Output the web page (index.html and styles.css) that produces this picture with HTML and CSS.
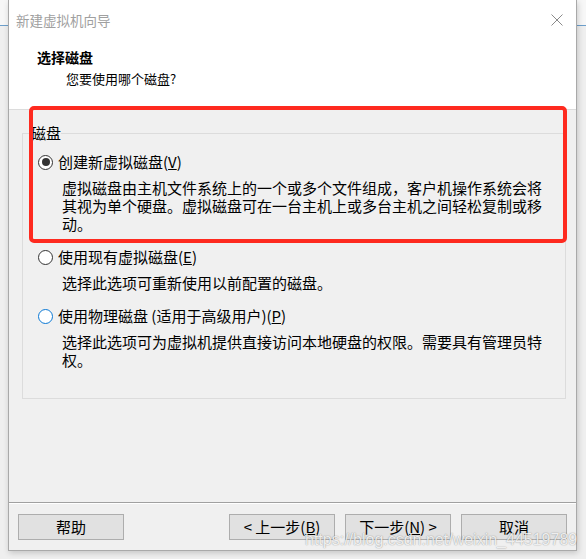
FILE: index.html
```html
<!DOCTYPE html>
<html lang="zh-CN">
<head>
<meta charset="utf-8">
<link rel="stylesheet" href="styles.css">
</head>
<body>
<div class="desk">
  <div class="window">
    <div class="header">
      <div class="titlebar">
        <span class="title">新建虚拟机向导</span>
        <svg class="close" width="12" height="12" viewBox="0 0 12 12"><path d="M0.5 0.5 L11.5 11.5 M11.5 0.5 L0.5 11.5" stroke="#8a8a8a" stroke-width="1" fill="none"/></svg>
      </div>
      <div class="heading">选择磁盘</div>
      <div class="subheading">您要使用哪个磁盘?</div>
    </div>
    <div class="content">
      <fieldset class="group">
        <legend class="group-label">磁盘</legend>
        <div class="options">
          <div class="option">
            <div class="opt-row"><span class="radio checked"></span><span class="opt-label">创建新虚拟磁盘(<u>V</u>)</span></div>
            <div class="desc">虚拟磁盘由主机文件系统上的一个或多个文件组成，客户机操作系统会将<br>其视为单个硬盘。虚拟磁盘可在一台主机上或多台主机之间轻松复制或移<br>动。</div>
          </div>
          <div class="option">
            <div class="opt-row"><span class="radio"></span><span class="opt-label">使用现有虚拟磁盘(<u>E</u>)</span></div>
            <div class="desc">选择此选项可重新使用以前配置的磁盘。</div>
          </div>
          <div class="option">
            <div class="opt-row"><span class="radio focus"></span><span class="opt-label">使用物理磁盘 (适用于高级用户)(<u>P</u>)</span></div>
            <div class="desc">选择此选项可为虚拟机提供直接访问本地硬盘的权限。需要具有管理员特<br>权。</div>
          </div>
        </div>
      </fieldset>
    </div>
    <div class="footer">
      <button class="btn">帮助</button>
      <div class="spacer"></div>
      <div class="btn-group">
        <button class="btn">&lt; 上一步(<u>B</u>)</button>
        <button class="btn">下一步(<u>N</u>) &gt;</button>
        <button class="btn">取消</button>
      </div>
    </div>
    <div class="annotation"></div>
    <div class="watermark">https://blog.csdn.net/weixin_44519789</div>
  </div>
</div>
</body>
</html>
```

FILE: styles.css
```css
* { box-sizing: border-box; }

html, body {
  margin: 0;
  padding: 0;
  width: 586px;
  height: 559px;
  overflow: hidden;
}

body {
  background: linear-gradient(to bottom, #f7f7f7 0, #f7f7f7 25px, #6d9fcb 25px, #6d9fcb 26px, #efefef 26px);
  font-family: "Noto Sans CJK SC", "Noto Sans", sans-serif;
  color: #000;
}

.desk {
  padding-left: 8px;
}

.window {
  position: relative;
  width: 569px;
  height: 551px;
  background: #f0f0f0;
  border: 1px solid #a9a9a9;
  border-top: none;
  box-shadow: 1px 2px 6px rgba(0, 0, 0, 0.18);
  display: flex;
  flex-direction: column;
}

.header {
  height: 110px;
  background: #fff;
  border-bottom: 1px solid #dcdcdc;
}

.titlebar {
  height: 40px;
  display: flex;
  align-items: center;
  justify-content: space-between;
  padding-left: 7px;
  padding-right: 13px;
}

.title {
  font-size: 13.5px;
  color: #a0a0a0;
  line-height: 18px;
}

.close { display: block; }

.heading {
  margin-top: 8px;
  padding-left: 28px;
  font-size: 14px;
  font-weight: bold;
  line-height: 18px;
}

.subheading {
  margin-top: 4px;
  padding-left: 57px;
  font-size: 13px;
  line-height: 18px;
}

.content {
  flex: 1;
}

.group {
  margin: 14px 10px 0 13px;
  padding: 0 0 0 8px;
  height: 275px;
  border: 1px solid #dcdcdc;
  min-width: 0;
}

.group-label {
  padding: 0;
  font-size: 15px;
  line-height: 18px;
}

.options {
  padding-left: 7px;
  padding-top: 10px;
}

.option {
  margin-bottom: 14px;
}

.opt-row {
  display: flex;
  align-items: center;
  gap: 5px;
  height: 20px;
  font-size: 15px;
  line-height: 20px;
}

.radio {
  width: 15px;
  height: 15px;
  border: 1px solid #333;
  border-radius: 50%;
  background: #fff;
  display: flex;
  align-items: center;
  justify-content: center;
  flex: none;
}

.radio.checked::after {
  content: "";
  width: 8px;
  height: 8px;
  border-radius: 50%;
  background: #333;
}

.radio.focus {
  border-color: #0a78d4;
}

.desc {
  margin-top: 7px;
  padding-left: 24px;
  font-size: 15px;
  line-height: 18px;
  white-space: nowrap;
}

.footer {
  border-top: 1px solid #a0a0a0;
  box-shadow: inset 0 1px 0 #ffffff;
  padding: 11px 9px 10px 9px;
  display: flex;
  height: 48px;
}

.spacer { flex: 1; }

.btn-group {
  display: flex;
  gap: 10px;
}

.btn {
  width: 106px;
  height: 26px;
  padding: 0;
  background: #e1e1e1;
  border: 1px solid #adadad;
  font-family: "Noto Sans CJK SC", "Noto Sans", sans-serif;
  font-size: 15px;
  line-height: 22px;
  color: #000;
}

.annotation {
  position: absolute;
  left: 20px;
  top: 106px;
  width: 538px;
  height: 137px;
  border: 4px solid #fe2a1f;
  border-radius: 5px;
}

.watermark {
  position: absolute;
  left: 296px;
  top: 530px;
  font-family: "Liberation Sans", Arial, sans-serif;
  font-size: 16px;
  line-height: 20px;
  color: rgba(255, 255, 255, 0.85);
  text-shadow: 0 0 1px rgba(0, 0, 0, 0.35), 0 0 2px rgba(0, 0, 0, 0.15);
  white-space: nowrap;
}
```
